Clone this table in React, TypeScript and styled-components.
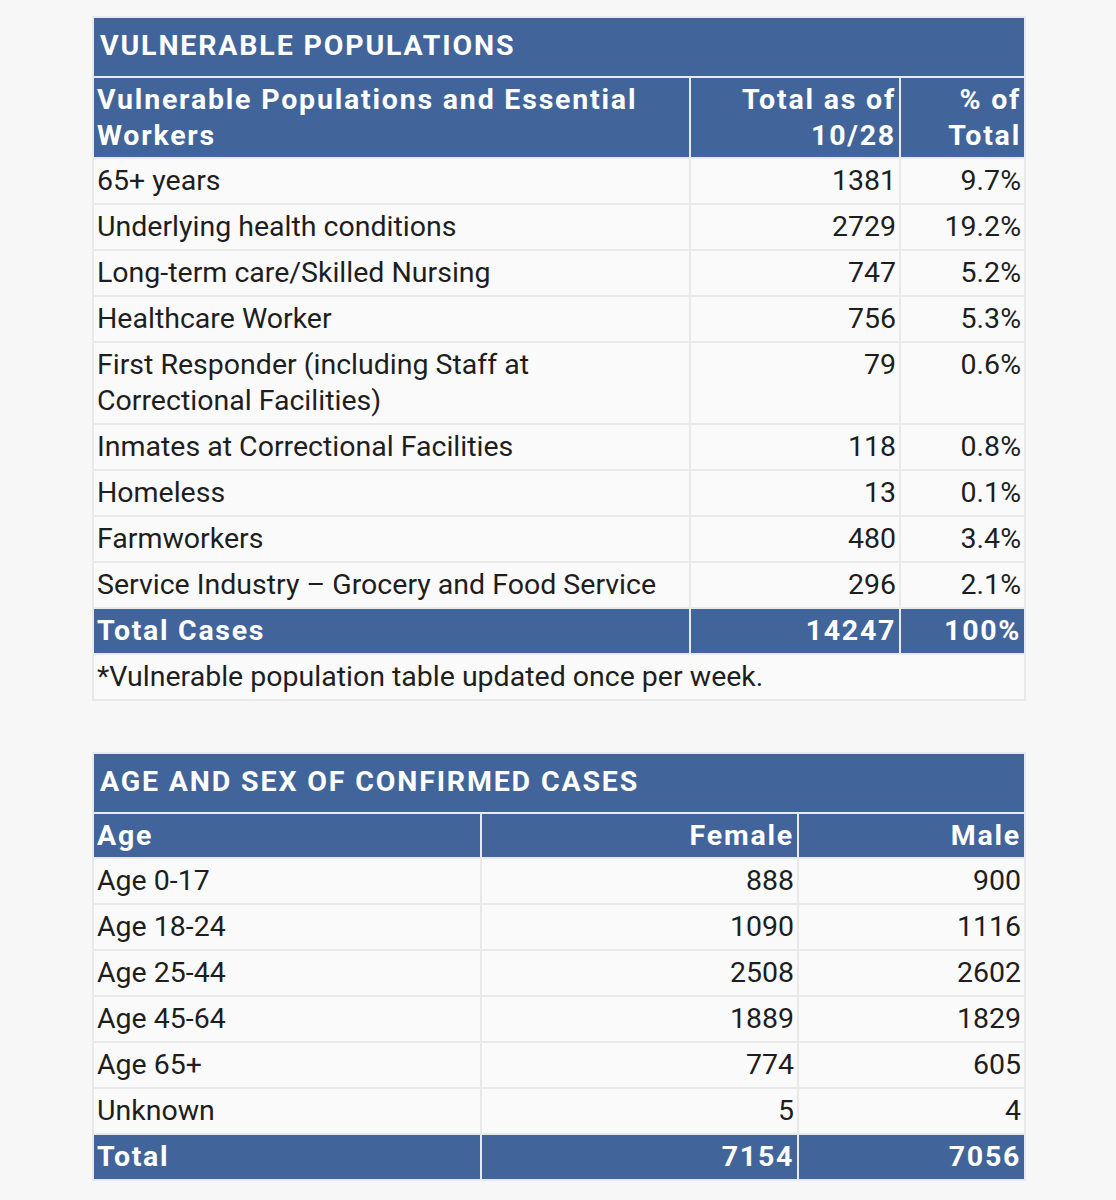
import React from "react";
import styled, { createGlobalStyle } from "styled-components";

const Global = createGlobalStyle`
  html, body { margin: 0; padding: 0; background: #f7f7f7; }
  body { font-family: Roboto, "Liberation Sans", Arial, sans-serif; color: #1e1e1e; }
`;

const Page = styled.div`
  display: flex;
  flex-direction: column;
  gap: 51px;
  padding: 16px 92px 0 92px;
`;

const Table = styled.table`
  width: 932px;
  border-collapse: collapse;
  table-layout: fixed;
  background: #fafafa;
  border: 2px solid #e9e9e9;
`;

const TitleCell = styled.th`
  background: #41659a;
  color: #fff;
  text-align: left;
  font-size: 28.5px;
  font-weight: 700;
  letter-spacing: 1.85px;
  line-height: 36px;
  padding: 10px 6px 12px 6px;
  border: 2px solid #e6eaf0;
`;

const HeadCell = styled.th<{ $right?: boolean }>`
  background: #41659a;
  color: #fff;
  text-align: ${(p) => (p.$right ? "right" : "left")};
  font-size: 28.5px;
  font-weight: 700;
  letter-spacing: 1.8px;
  line-height: 36px;
  padding: 4px 3px 3px 3px;
  vertical-align: top;
  border: 2px solid #e6eaf0;
`;

const Cell = styled.td<{ $right?: boolean }>`
  text-align: ${(p) => (p.$right ? "right" : "left")};
  font-size: 28.5px;
  line-height: 36px;
  padding: 4px 3px;
  vertical-align: top;
  border: 2px solid #e9e9e9;
  color: #1e1e1e;
`;

const TotalCell = styled.td<{ $right?: boolean }>`
  background: #41659a;
  color: #fff;
  text-align: ${(p) => (p.$right ? "right" : "left")};
  font-size: 28.5px;
  font-weight: 700;
  letter-spacing: 1.7px;
  line-height: 36px;
  padding: 4px 3px;
  border: 2px solid #e6eaf0;
`;

const vulnerable: [string, string, string][] = [
  ["65+ years", "1381", "9.7%"],
  ["Underlying health conditions", "2729", "19.2%"],
  ["Long-term care/Skilled Nursing", "747", "5.2%"],
  ["Healthcare Worker", "756", "5.3%"],
  ["First Responder (including Staff at Correctional Facilities)", "79", "0.6%"],
  ["Inmates at Correctional Facilities", "118", "0.8%"],
  ["Homeless", "13", "0.1%"],
  ["Farmworkers", "480", "3.4%"],
  ["Service Industry \u2013 Grocery and Food Service", "296", "2.1%"],
];

const ages: [string, string, string][] = [
  ["Age 0-17", "888", "900"],
  ["Age 18-24", "1090", "1116"],
  ["Age 25-44", "2508", "2602"],
  ["Age 45-64", "1889", "1829"],
  ["Age 65+", "774", "605"],
  ["Unknown", "5", "4"],
];

const Wrapped = styled.span`
  display: block;
  max-width: 500px;
`;

export default function App() {
  return (
    <>
      <Global />
      <Page>
        <Table>
          <colgroup>
            <col style={{ width: 597 }} />
            <col style={{ width: 210 }} />
            <col style={{ width: 125 }} />
          </colgroup>
          <thead>
            <tr>
              <TitleCell colSpan={3}>VULNERABLE POPULATIONS</TitleCell>
            </tr>
            <tr>
              <HeadCell>Vulnerable Populations and Essential Workers</HeadCell>
              <HeadCell $right>Total as of 10/28</HeadCell>
              <HeadCell $right>% of Total</HeadCell>
            </tr>
          </thead>
          <tbody>
            {vulnerable.map(([a, b, c]) => (
              <tr key={a}>
                <Cell>{a.startsWith("First") ? <Wrapped>{a}</Wrapped> : a}</Cell>
                <Cell $right>{b}</Cell>
                <Cell $right>{c}</Cell>
              </tr>
            ))}
            <tr>
              <TotalCell>Total Cases</TotalCell>
              <TotalCell $right>14247</TotalCell>
              <TotalCell $right>100%</TotalCell>
            </tr>
            <tr>
              <Cell colSpan={3}>*Vulnerable population table updated once per week.</Cell>
            </tr>
          </tbody>
        </Table>

        <Table>
          <colgroup>
            <col style={{ width: 388 }} />
            <col style={{ width: 317 }} />
            <col style={{ width: 227 }} />
          </colgroup>
          <thead>
            <tr>
              <TitleCell colSpan={3}>AGE AND SEX OF CONFIRMED CASES</TitleCell>
            </tr>
            <tr>
              <HeadCell>Age</HeadCell>
              <HeadCell $right>Female</HeadCell>
              <HeadCell $right>Male</HeadCell>
            </tr>
          </thead>
          <tbody>
            {ages.map(([a, b, c]) => (
              <tr key={a}>
                <Cell>{a}</Cell>
                <Cell $right>{b}</Cell>
                <Cell $right>{c}</Cell>
              </tr>
            ))}
            <tr>
              <TotalCell>Total</TotalCell>
              <TotalCell $right>7154</TotalCell>
              <TotalCell $right>7056</TotalCell>
            </tr>
          </tbody>
        </Table>
      </Page>
    </>
  );
}
